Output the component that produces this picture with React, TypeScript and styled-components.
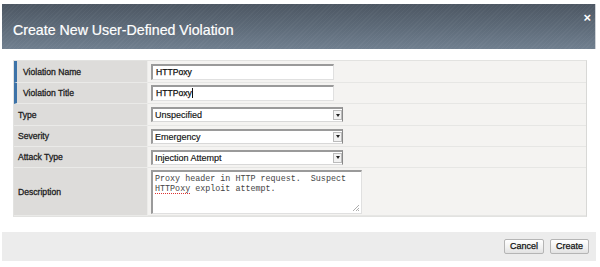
import React from "react";
import styled, { createGlobalStyle } from "styled-components";

const Global = createGlobalStyle`
  html, body { margin: 0; padding: 0; background: #fff; }
  body { font-family: "Liberation Sans", Arial, sans-serif; }
`;

const Dialog = styled.div`
  width: 594px;
  padding: 4px 4px 0 2px;
  display: flex;
  flex-direction: column;
`;

const Header = styled.div`
  height: 45px;
  display: flex;
  align-items: flex-start;
  justify-content: space-between;
  background:
    repeating-linear-gradient(135deg, rgba(255,255,255,0.03) 0 1px, rgba(0,0,0,0) 1px 3px),
    linear-gradient(180deg, #4d5763 0%, #5d6a78 50%, #707f8f 100%);
  border-right: 1px solid #cfd3d8;
`;

const Title = styled.h1`
  margin: 18px 0 0 11px;
  font-size: 14.2px;
  line-height: 16px;
  font-weight: normal;
  color: #ffffff;
  -webkit-text-stroke: 0.2px #fff;
`;

const Close = styled.span`
  margin: 7px 4px 0 0;
  color: #fff;
  font-size: 13px;
  font-weight: bold;
  line-height: 13px;
`;

const Body = styled.div`
  padding: 11px 9px 15px 11px;
`;

const Table = styled.div`
  display: grid;
  grid-template-columns: 134px 1fr;
  border: 1px solid #e2e2e0;
  border-right-color: #d8d8d6;
`;

const Label = styled.div<{ $req?: boolean; $h: number }>`
  height: ${(p) => p.$h}px;
  box-sizing: border-box;
  display: flex;
  align-items: center;
  padding-left: ${(p) => (p.$req ? "6px" : "4px")};
  background: #dddcda;
  border-left: ${(p) => (p.$req ? "3px solid #3d73a8" : "none")};
  border-bottom: 1px solid #eaeae8;
  border-right: 1px solid #ececea;
  font-size: 8.6px;
  color: #222;
  -webkit-text-stroke: 0.3px #222;
`;

const Value = styled.div<{ $h: number; $top?: boolean }>`
  height: ${(p) => p.$h}px;
  box-sizing: border-box;
  display: flex;
  align-items: ${(p) => (p.$top ? "flex-start" : "center")};
  padding: ${(p) => (p.$top ? "2px 0 0 3px" : "0 0 0 3px")};
  background: #f4f3f1;
  border-bottom: 1px solid #e6e6e4;
`;

const TextInput = styled.div`
  width: 183px;
  height: 16px;
  box-sizing: border-box;
  background: #fff;
  border-top: 2px solid #9a9a9a;
  border-left: 2px solid #9a9a9a;
  border-right: 1px solid #e0e0e0;
  border-bottom: 1px solid #e0e0e0;
  font-size: 8.6px;
  line-height: 13px;
  padding-left: 3px;
  color: #111;
  -webkit-text-stroke: 0.25px #111;
`;

const Caret = styled.span`
  display: inline-block;
  width: 1px;
  height: 10px;
  background: #111;
  vertical-align: -2px;
`;

const Select = styled.div`
  width: 192px;
  height: 15px;
  box-sizing: border-box;
  background: #fff;
  border-top: 2px solid #9a9a9a;
  border-left: 2px solid #9a9a9a;
  border-right: 1px solid #888;
  border-bottom: 1px solid #d8d8d8;
  display: flex;
  align-items: center;
  justify-content: space-between;
  font-size: 9px;
  color: #111;
  padding-left: 2px;
  -webkit-text-stroke: 0.15px #111;
`;

const Arrow = styled.div`
  width: 9px;
  height: 10px;
  box-sizing: border-box;
  border: 1px solid #bbb;
  background: #f2f2f2;
  display: flex;
  align-items: center;
  justify-content: center;
  &::after {
    content: "";
    border-left: 2px solid transparent;
    border-right: 2px solid transparent;
    border-top: 3px solid #222;
  }
`;

const TextArea = styled.div`
  position: relative;
  width: 211px;
  height: 44px;
  box-sizing: border-box;
  background: #fff;
  border-top: 2px solid #9a9a9a;
  border-left: 2px solid #9a9a9a;
  border-right: 1px solid #e0e0e0;
  border-bottom: 1px solid #e0e0e0;
  font-family: "Liberation Mono", "Courier New", monospace;
  font-size: 8.4px;
  line-height: 10px;
  padding: 2px 2px;
  color: #444;
  white-space: pre;
`;

const Squiggle = styled.span`
  text-decoration: underline dotted #d33;
  text-decoration-thickness: 1px;
  text-underline-offset: 2px;
`;

const Grip = styled.svg`
  position: absolute;
  right: 1px;
  bottom: 1px;
`;

const Footer = styled.div`
  height: 29px;
  background: #ececec;
  display: flex;
  align-items: center;
  justify-content: flex-end;
  gap: 6px;
  padding-right: 7px;
`;

const Button = styled.button`
  height: 15px;
  padding: 0 5px;
  border: 1px solid #b5b5b5;
  border-radius: 2px;
  background: linear-gradient(180deg, #ffffff 0%, #f0f0f0 60%, #e2e2e2 100%);
  font-family: "Liberation Sans", Arial, sans-serif;
  font-size: 9px;
  color: #111;
  -webkit-text-stroke: 0.25px #111;
  line-height: 13px;
`;

type Row = { label: string; req?: boolean; h: number; kind: "text" | "select"; value: string; caret?: boolean };

const rows: Row[] = [
  { label: "Violation Name", req: true, h: 22, kind: "text", value: "HTTPoxy" },
  { label: "Violation Title", req: true, h: 21, kind: "text", value: "HTTPoxy", caret: true },
  { label: "Type", h: 22, kind: "select", value: "Unspecified" },
  { label: "Severity", h: 21, kind: "select", value: "Emergency" },
  { label: "Attack Type", h: 21, kind: "select", value: "Injection Attempt" },
];

export default function App() {
  return (
    <>
      <Global />
      <Dialog>
        <Header>
          <Title>Create New User-Defined Violation</Title>
          <Close>×</Close>
        </Header>
        <Body>
          <Table>
            {rows.map((r) => (
              <React.Fragment key={r.label}>
                <Label $req={r.req} $h={r.h}>{r.label}</Label>
                <Value $h={r.h}>
                  {r.kind === "text" ? (
                    <TextInput>
                      {r.value}
                      {r.caret && <Caret />}
                    </TextInput>
                  ) : (
                    <Select>
                      {r.value}
                      <Arrow />
                    </Select>
                  )}
                </Value>
              </React.Fragment>
            ))}
            <Label $h={48}>Description</Label>
            <Value $h={48} $top>
              <TextArea>
                {"Proxy header in HTTP request.  Suspect\n"}
                <Squiggle>HTTPoxy</Squiggle>
                {" exploit attempt."}
                <Grip width="8" height="8" viewBox="0 0 8 8">
                  <path d="M7 1L1 7M7 4L4 7M7 6L6 7" stroke="#999" strokeWidth="0.8" />
                </Grip>
              </TextArea>
            </Value>
          </Table>
        </Body>
        <Footer>
          <Button>Cancel</Button>
          <Button>Create</Button>
        </Footer>
      </Dialog>
    </>
  );
}
